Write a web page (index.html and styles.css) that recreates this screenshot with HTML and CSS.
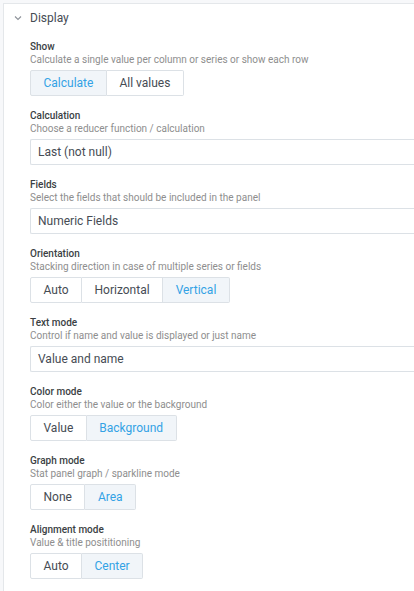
FILE: index.html
```html
<!DOCTYPE html>
<html>
<head>
<meta charset="utf-8">
<link rel="stylesheet" href="styles.css">
</head>
<body>
<div class="panel">
  <div class="header">
    <svg class="chev" width="8" height="6" viewBox="0 0 8 6"><path d="M1 1.5 L4 4.5 L7 1.5" fill="none" stroke="#8e9299" stroke-width="1.1"/></svg>
    <span class="title">Display</span>
  </div>
  <div class="fields">
    <div class="field">
      <div class="label">Show</div>
      <div class="desc">Calculate a single value per column or series or show each row</div>
      <div class="radio"><span class="btn active">Calculate</span><span class="btn">All values</span></div>
    </div>
    <div class="field">
      <div class="label">Calculation</div>
      <div class="desc">Choose a reducer function / calculation</div>
      <div class="select">Last (not null)</div>
    </div>
    <div class="field">
      <div class="label">Fields</div>
      <div class="desc">Select the fields that should be included in the panel</div>
      <div class="select">Numeric Fields</div>
    </div>
    <div class="field">
      <div class="label">Orientation</div>
      <div class="desc">Stacking direction in case of multiple series or fields</div>
      <div class="radio"><span class="btn">Auto</span><span class="btn">Horizontal</span><span class="btn active">Vertical</span></div>
    </div>
    <div class="field">
      <div class="label">Text mode</div>
      <div class="desc">Control if name and value is displayed or just name</div>
      <div class="select">Value and name</div>
    </div>
    <div class="field">
      <div class="label">Color mode</div>
      <div class="desc">Color either the value or the background</div>
      <div class="radio"><span class="btn">Value</span><span class="btn active">Background</span></div>
    </div>
    <div class="field">
      <div class="label">Graph mode</div>
      <div class="desc">Stat panel graph / sparkline mode</div>
      <div class="radio"><span class="btn">None</span><span class="btn active">Area</span></div>
    </div>
    <div class="field">
      <div class="label">Alignment mode</div>
      <div class="desc">Value &amp; title posititioning</div>
      <div class="radio"><span class="btn">Auto</span><span class="btn active">Center</span></div>
    </div>
  </div>
</div>
</body>
</html>
```

FILE: styles.css
```css
html, body {
  margin: 0;
  padding: 0;
  background: #f7f8fa;
  overflow: hidden;
  font-family: Roboto, "Liberation Sans", sans-serif;
}
.panel {
  margin: 3px 0 0 3px;
  border-top: 1px solid #e4e7ea;
  border-left: 1px solid #e4e7ea;
  background: #ffffff;
  height: 600px;
}
.header {
  height: 28px;
  display: flex;
  align-items: center;
}
.chev {
  margin-left: 10px;
  margin-right: 8px;
}
.title {
  font-size: 12px;
  color: #464c54;
}
.fields {
  padding: 7px 0 0 26px;
}
.field {
  margin-bottom: 12px;
}
.label {
  font-size: 10px;
  line-height: 14px;
  font-weight: 500;
  color: #3b3f44;
  padding-top: 1px;
  margin-bottom: -1px;
}
.desc {
  font-size: 10px;
  line-height: 14px;
  color: #8e8e8e;
  margin-bottom: 3px;
}
.radio {
  display: flex;
}
.btn {
  height: 26px;
  box-sizing: border-box;
  display: flex;
  align-items: center;
  padding: 0 12.5px;
  border: 1px solid #dce1e6;
  font-size: 12px;
  color: #464c54;
  background: #fff;
}
.btn + .btn {
  border-left: none;
}
.btn:first-child {
  border-radius: 2px 0 0 2px;
}
.btn:last-child {
  border-radius: 0 2px 2px 0;
}
.btn.active {
  background: #f1f5f9;
  color: #33a2e5;
}
.select {
  height: 26px;
  box-sizing: border-box;
  width: 386px;
  display: flex;
  align-items: center;
  padding-left: 7px;
  border: 1px solid #dce1e6;
  border-right: none;
  border-radius: 2px 0 0 2px;
  font-size: 12px;
  color: #464c54;
}
```
